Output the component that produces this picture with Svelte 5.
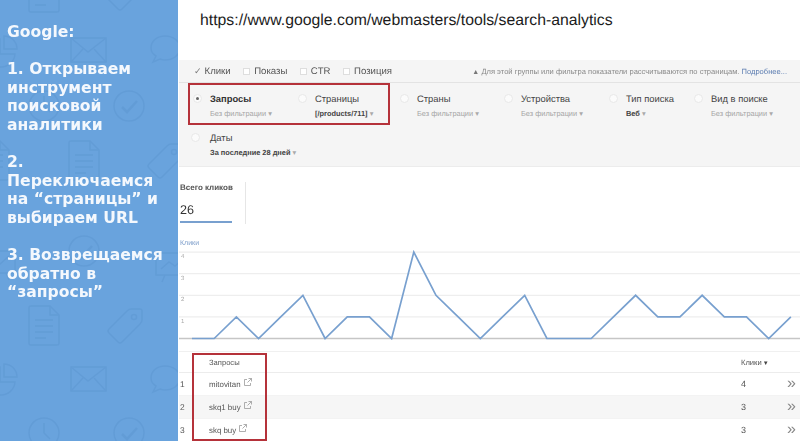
<script lang="ts">
	const wallpaper = [
		{ id: 'doc', x: 28, y: -28 }, { id: 'tag', x: 108, y: -25 },
		{ id: 'pie', x: -16, y: 35 }, { id: 'mail', x: 70, y: 37 }, { id: 'chat', x: 150, y: 35 },
		{ id: 'clock', x: 28, y: 90 }, { id: 'check', x: 113, y: 90 },
		{ id: 'doc', x: 68, y: 140 }, { id: 'tag', x: 148, y: 143 }, { id: 'doc', x: -22, y: 140 },
		{ id: 'screen', x: -20, y: 250 }, { id: 'check', x: 68, y: 235 }, { id: 'screen', x: 155, y: 252 },
		{ id: 'doc', x: 28, y: 305 }, { id: 'tag', x: 108, y: 308 },
		{ id: 'pie', x: -16, y: 363 }, { id: 'mail', x: 70, y: 366 }, { id: 'chat', x: 150, y: 365 },
		{ id: 'clock', x: 28, y: 417 }, { id: 'check', x: 113, y: 417 }
	];

	const filters = [
		{ label: 'Запросы', sub: 'Без фильтрации', w: 105, active: true },
		{ label: 'Страницы', sub: '[/products/711]', w: 102, strong: true },
		{ label: 'Страны', sub: 'Без фильтрации', w: 104 },
		{ label: 'Устройства', sub: 'Без фильтрации', w: 105 },
		{ label: 'Тип поиска', sub: 'Веб', w: 85, strong: true },
		{ label: 'Вид в поиске', sub: 'Без фильтрации', w: 100 }
	];

	const clicks = [0, 0, 1, 0, 1, 2, 0, 1, 1, 0, 4, 2, 1, 0, 1, 2, 0, 0, 0, 1, 2, 1, 1, 2, 1, 1, 0, 1];
	const baseY = 88.5;
	const stepY = 21.6;
	const points = clicks.map((v, i) => `${13 + i * 22.18},${baseY - v * stepY}`).join(' ');

	const rows = [
		{ n: 1, q: 'mitovitan', c: 4 },
		{ n: 2, q: 'skq1 buy', c: 3 },
		{ n: 3, q: 'skq buy', c: 3 }
	];
</script>

<div class="slide">
	<aside class="side">
		<svg class="wall" width="179" height="441" fill="none" stroke="#5c96d0" stroke-width="1.5" aria-hidden="true">
			<defs>
				<g id="doc">
					<path d="M1 3q0-2 2-2h19l9 9v28q0 2-2 2H3q-2 0-2-2z" />
					<path d="M22 1v9h9M7 15h18M7 21h18M7 27h18M7 33h11" />
				</g>
				<g id="tag">
					<path d="M1 21 19 3q2-2 4-2h9q2 0 2 2v9q0 2-2 4L14 34q-2 2-4 0L1 25q-2-2 0-4z" />
					<circle cx="26" cy="9" r="2.5" />
				</g>
				<g id="pie">
					<path d="M16 4a14 14 0 1 0 15 15H16z" />
					<path d="M20 1a13 13 0 0 1 13 13H20z" />
				</g>
				<g id="mail">
					<rect x="1" y="1" width="35" height="24" />
					<path d="m1 1 17 14L36 1M1 25l12-13M36 25 24 12" />
				</g>
				<g id="chat">
					<path d="M15 1c8 0 15 5 15 12s-7 12-15 12q-3 0-5-1l-7 3 3-6q-5-3-5-8C1 6 7 1 15 1z" />
				</g>
				<g id="clock">
					<circle cx="16" cy="16" r="15" />
					<path d="M16 6v10l6 6" />
				</g>
				<g id="check">
					<circle cx="16" cy="16" r="15" />
					<path d="m9 17 5 5 10-11" stroke-width="2.6" />
				</g>
				<g id="screen">
					<rect x="1" y="1" width="34" height="22" />
					<path d="m6 17 8-7 6 4 9-8M10 23l-3 7M26 23l3 7" />
				</g>
			</defs>
			{#each wallpaper as item}
				<use href="#{item.id}" x={item.x} y={item.y} />
			{/each}
		</svg>
		<div class="steps">
			<p>Google:</p>
			<p>1. Открываем<br />инструмент<br />поисковой<br />аналитики</p>
			<p>2.<br />Переключаемся<br />на “страницы” и<br />выбираем URL</p>
			<p>3. Возврещаемся<br />обратно в<br />“запросы”</p>
		</div>
	</aside>

	<main class="main">
		<header class="url">https://www.google.com/webmasters/tools/search-analytics</header>

		<div class="shot">
			<div class="metrics">
				<span class="metric"><span class="tick">✓</span>Клики</span>
				<span class="metric"><i class="box"></i>Показы</span>
				<span class="metric"><i class="box"></i>CTR</span>
				<span class="metric"><i class="box"></i>Позиция</span>
				<span class="note">
					<span class="warn">▲</span> Для этой группы или фильтра показатели рассчитываются по страницам.
					<a href="#more">Подробнее...</a>
				</span>
			</div>

			<div class="filters">
				<div class="filter-row">
					{#each filters as f}
						<div class="filter" style="width: {f.w}px">
							<i class="radio" class:on={f.active}></i>
							<div>
								<div class="label" class:bold={f.active}>{f.label}</div>
								<div class="sub" class:strong={f.strong}>{f.sub} <span class="caret">▾</span></div>
							</div>
						</div>
					{/each}
				</div>
				<div class="filter-row">
					<div class="filter dates">
						<i class="radio"></i>
						<div>
							<div class="label">Даты</div>
							<div class="sub strong">За последние 28 дней <span class="caret">▾</span></div>
						</div>
					</div>
				</div>
				<div class="mark mark-top"></div>
			</div>

			<div class="total">
				<div class="total-card">
					<div class="total-title">Всего кликов</div>
					<div class="total-num">26</div>
				</div>
			</div>

			<div class="chart-title">Клики</div>
			<svg class="chart" width="621" height="92" viewBox="0 0 621 92">
				{#each [1, 2, 3, 4] as v}
					<line x1="0" x2="621" y1={baseY - v * stepY} y2={baseY - v * stepY} stroke="#eeeeee" stroke-width="1.2" />
					<text x="2" y={baseY - v * stepY + 6} class="tick-label">{v}</text>
				{/each}
				<line x1="0" x2="621" y1={baseY} y2={baseY} stroke="#c6c6c6" stroke-width="1.6" />
				<polyline {points} fill="none" stroke="#78a0cf" stroke-width="1.7" />
			</svg>

			<div class="table">
				<div class="tr head">
					<span class="num"></span>
					<span class="query">Запросы</span>
					<span class="val">Клики <span class="sort">▼</span></span>
					<span class="more"></span>
				</div>
				{#each rows as row}
					<div class="tr" class:alt={row.n === 2}>
						<span class="num">{row.n}</span>
						<span class="query">{row.q}
							<svg width="8" height="8" viewBox="0 0 8 8" fill="none" stroke="#9a9a9a" stroke-width="0.8">
								<path d="M3 1.5H.5v6h6V5M4.5.5h3v3M7.5.5 3.5 4.5" />
							</svg>
						</span>
						<span class="val count">{row.c}</span>
						<span class="more">»</span>
					</div>
				{/each}
				<div class="mark mark-table"></div>
			</div>
		</div>
	</main>
</div>

<style>
	:global(body) {
		margin: 0;
		background: #fff;
	}

	.slide {
		display: flex;
		width: 800px;
		height: 441px;
		overflow: hidden;
	}

	.side {
		position: relative;
		flex: 0 0 178px;
		margin-right: 1px;
		background: #69a3dd;
		overflow: hidden;
	}

	.wall {
		position: absolute;
		left: 0;
		top: 0;
		opacity: 0.5;
		filter: blur(0.4px);
	}

	.steps {
		position: relative;
		padding: 23px 0 0 7px;
		color: #f4f8fd;
		font-family: 'DejaVu Sans', sans-serif;
		font-weight: 700;
		font-size: 15.6px;
		line-height: 18.6px;
		white-space: nowrap;
		filter: blur(0.3px);
	}

	.steps p {
		margin: 0 0 18.6px;
	}

	.main {
		flex: 1;
		min-width: 0;
		font-family: 'Liberation Sans', sans-serif;
		text-rendering: geometricPrecision;
	}

	.url {
		height: 60px;
		box-sizing: border-box;
		padding: 12px 0 0 21px;
		font-size: 15.8px;
		line-height: 18px;
		color: #1c1c1c;
		white-space: nowrap;
	}

	.shot {
		filter: blur(0.35px);
	}

	.metrics {
		display: flex;
		align-items: center;
		height: 23px;
		padding-left: 15px;
		box-sizing: border-box;
		background: #f5f5f5;
		border-bottom: 1px solid #e3e3e3;
		font-size: 9.6px;
		color: #555;
	}

	.metric {
		display: flex;
		align-items: center;
		gap: 4px;
		margin-right: 12.5px;
	}

	.tick {
		font-size: 9px;
		color: #777;
		margin-right: -1px;
	}

	.box {
		width: 7px;
		height: 7px;
		box-sizing: border-box;
		background: #fff;
		border: 1px solid #dedede;
	}

	.note {
		margin-left: auto;
		margin-right: 13px;
		font-size: 7.55px;
		color: #8a8a8a;
		white-space: nowrap;
	}

	.warn {
		font-size: 7px;
		color: #777;
	}

	.note a {
		color: #5b7cb0;
		text-decoration: none;
	}

	.filters {
		position: relative;
		height: 84px;
		box-sizing: border-box;
		padding: 9px 0 0 14px;
		background: #f5f5f5;
		border-bottom: 1px solid #ececec;
	}

	.filter-row {
		display: flex;
		height: 39px;
	}

	.filter {
		display: flex;
		gap: 8px;
	}

	.dates {
		margin-left: -2px;
		gap: 10px;
	}

	.radio {
		flex: none;
		position: relative;
		width: 9px;
		height: 9px;
		margin-top: 2px;
		border-radius: 50%;
		background: #fbfbfb;
		border: 1px solid #e8e8e8;
		box-sizing: border-box;
	}

	.radio.on::after {
		content: '';
		position: absolute;
		left: 2px;
		top: 2px;
		width: 3px;
		height: 3px;
		border-radius: 50%;
		background: #666;
	}

	.label {
		font-size: 9.4px;
		line-height: 13px;
		color: #444;
		white-space: nowrap;
	}

	.label.bold {
		font-weight: 700;
		color: #333;
	}

	.sub {
		margin-top: 4px;
		font-size: 7.4px;
		line-height: 10px;
		color: #a5a5a5;
		white-space: nowrap;
	}

	.sub.strong {
		font-weight: 700;
		color: #444;
	}

	.caret {
		font-weight: 400;
		color: #aaa;
	}

	.mark {
		position: absolute;
		border: 2px solid #b5323a;
		box-sizing: border-box;
	}

	.mark-top {
		left: 9px;
		top: 0;
		width: 202px;
		height: 42px;
	}

	.total {
		height: 70px;
		padding: 15px 0 0 1px;
		box-sizing: border-box;
	}

	.total-card {
		width: 65px;
		height: 42px;
		border-right: 1px solid #e6e6e6;
	}

	.total-title {
		font-size: 8px;
		line-height: 12px;
		font-weight: 700;
		color: #555;
	}

	.total-num {
		width: 52px;
		height: 29px;
		box-sizing: border-box;
		padding-top: 8px;
		font-size: 12.6px;
		line-height: 16px;
		color: #333;
		border-bottom: 2px solid #78a0cf;
	}

	.chart-title {
		height: 14px;
		padding-left: 1px;
		font-size: 7px;
		line-height: 14px;
		color: #7f9fcb;
	}

	.chart {
		display: block;
		margin-top: -1px;
	}

	.tick-label {
		font-size: 6px;
		fill: #aaa;
	}

	.table {
		position: relative;
		margin-top: 9px;
		border-top: 1px solid #f0f0f0;
	}

	.tr {
		display: flex;
		align-items: center;
		height: 23px;
		border-bottom: 1px solid #f3f3f3;
		box-sizing: border-box;
		font-size: 7.9px;
		color: #555;
	}

	.tr.head {
		height: 21px;
		font-size: 7.6px;
		border-bottom-color: #ececec;
	}

	.tr.alt {
		background: #f6f6f6;
	}

	.num {
		width: 30px;
		padding-left: 1px;
		box-sizing: border-box;
		font-size: 8.4px;
	}

	.query {
		width: 532px;
		display: flex;
		gap: 3px;
	}

	.query svg {
		margin-top: -2px;
	}

	.val {
		width: 46px;
		white-space: nowrap;
	}

	.sort {
		font-size: 6px;
		color: #444;
		margin-left: -1px;
	}

	.count {
		font-size: 9px;
	}

	.more {
		font-size: 16px;
		line-height: 16px;
		color: #888;
	}

	.mark-table {
		left: 13px;
		top: 1px;
		width: 75px;
		height: 88px;
	}
</style>
